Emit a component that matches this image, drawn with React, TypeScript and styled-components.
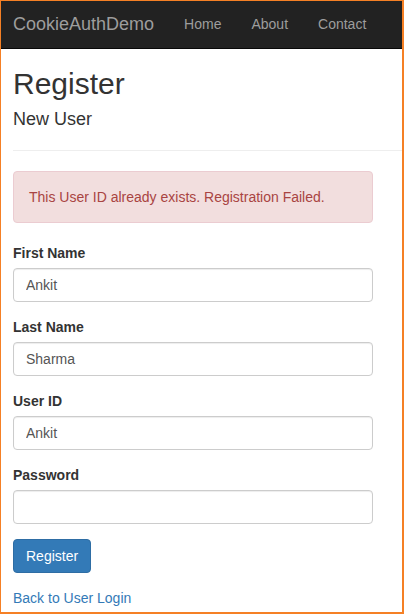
import React from 'react';
import styled, { createGlobalStyle } from 'styled-components';

const GlobalStyle = createGlobalStyle`
    html, body {
        margin: 0;
        padding: 0;
        background: #fff;
    }
    * {
        box-sizing: border-box;
    }
    body {
        font-family: "Liberation Sans", Arial, sans-serif;
        font-size: 14px;
        line-height: 20px;
        color: #333;
    }
`;

const Frame = styled.div`
    width: 404px;
    height: 614px;
    border: 1px solid #f58025;
    border-right-width: 2px;
    border-bottom-width: 2px;
    overflow: hidden;
    background: #fff;
`;

const Navbar = styled.nav`
    display: flex;
    align-items: center;
    height: 48px;
    background: #222;
    border-bottom: 1px solid #080808;
    padding: 0 0 2px 12px;
`;

const Brand = styled.a`
    font-size: 18px;
    line-height: 20px;
    color: #9d9d9d;
    text-decoration: none;
    margin-right: 15px;
`;

const NavLink = styled.a`
    font-size: 14px;
    line-height: 20px;
    color: #9d9d9d;
    text-decoration: none;
    padding: 0 15px;
`;

const Content = styled.main`
    padding-left: 12px;
`;

const Title = styled.h2`
    font-size: 30px;
    font-weight: 500;
    line-height: 1.1;
    margin: 18px 0 10px;
`;

const SubTitle = styled.h4`
    font-size: 18px;
    font-weight: 500;
    line-height: 1.1;
    margin: 10px 0 0;
`;

const Rule = styled.hr`
    border: 0;
    border-top: 1px solid #eee;
    margin: 20px 0 20px;
`;

const Form = styled.form`
    width: 360px;
`;

const Alert = styled.div`
    padding: 15px;
    margin-bottom: 20px;
    border: 1px solid #ebccd1;
    border-radius: 4px;
    background: #f2dede;
    color: #a94442;
`;

const FormGroup = styled.div`
    margin-bottom: 15px;
`;

const Label = styled.label`
    display: block;
    font-weight: bold;
    margin-bottom: 5px;
`;

const Input = styled.input`
    display: block;
    width: 100%;
    height: 34px;
    padding: 6px 12px;
    font-family: inherit;
    font-size: 14px;
    line-height: 20px;
    color: #555;
    background: #fff;
    border: 1px solid #ccc;
    border-radius: 4px;
    box-shadow: inset 0 1px 1px rgba(0, 0, 0, 0.075);
    outline: none;
`;

const Button = styled.button`
    display: block;
    height: 34px;
    padding: 6px 12px;
    font-family: inherit;
    font-size: 14px;
    line-height: 20px;
    color: #fff;
    background: #337ab7;
    border: 1px solid #2e6da4;
    border-radius: 4px;
    cursor: pointer;
`;

const BackLink = styled.a`
    display: block;
    margin-top: 15px;
    color: #337ab7;
    text-decoration: none;
`;

const fields = [
    { label: 'First Name', value: 'Ankit', type: 'text' },
    { label: 'Last Name', value: 'Sharma', type: 'text' },
    { label: 'User ID', value: 'Ankit', type: 'text' },
    { label: 'Password', value: '', type: 'password' },
];

export default function App() {
    return (
        <>
            <GlobalStyle />
            <Frame>
                <Navbar>
                    <Brand href="#">CookieAuthDemo</Brand>
                    <NavLink href="#">Home</NavLink>
                    <NavLink href="#">About</NavLink>
                    <NavLink href="#">Contact</NavLink>
                </Navbar>
                <Content>
                    <Title>Register</Title>
                    <SubTitle>New User</SubTitle>
                    <Rule />
                    <Form onSubmit={(e) => e.preventDefault()}>
                        <Alert>This User ID already exists. Registration Failed.</Alert>
                        {fields.map((f) => (
                            <FormGroup key={f.label}>
                                <Label>{f.label}</Label>
                                <Input type={f.type} defaultValue={f.value} />
                            </FormGroup>
                        ))}
                        <Button type="submit">Register</Button>
                        <BackLink href="#">Back to User Login</BackLink>
                    </Form>
                </Content>
            </Frame>
        </>
    );
}
